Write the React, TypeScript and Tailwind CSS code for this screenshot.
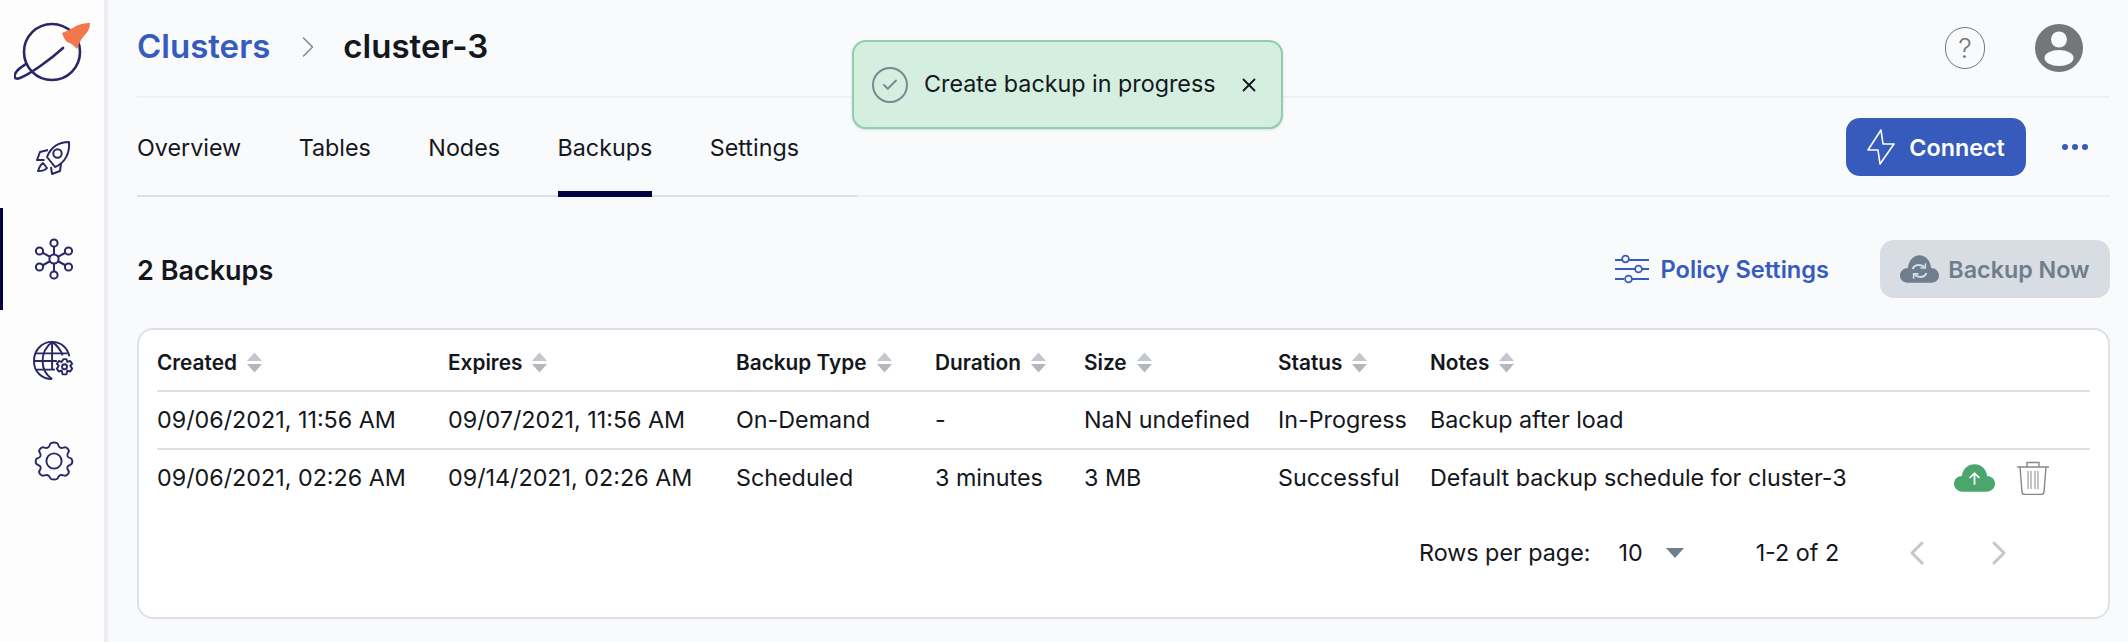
import { ChevronLeft, ChevronRight, X, Check } from "lucide-react";

const navy = "#2a2766";

function Logo() {
  return (
    <svg width="80" height="70" viewBox="0 0 80 70" fill="none">
      <g transform="translate(-14 -12)">
        <circle cx="52" cy="52" r="28" stroke={navy} strokeWidth="2.6" />
        <path d="M63 48 C50 60 30 74 20 78 C14 80 13 76 17 71 C19 68 23 66 26 64" stroke={navy} strokeWidth="2.6" strokeLinecap="round" />
        <path d="M62 33 C66 31 72 29 76 26 C80 24 85 23 90 23 C90 28 88 32 84 36 C81 39 79 44 77 49 C74 46 71 43 67 42 C64 39 63 36 62 33 Z" fill="#f2784b" />
      </g>
    </svg>
  );
}

function RocketIcon() {
  return (
    <svg width="40" height="40" viewBox="0 0 40 40" fill="none" stroke={navy} strokeWidth="2">
      <path d="M35 4 C25 4 17 9 13 19 L21 29 C31 25 36 15 35 4 Z" strokeLinejoin="round" />
      <circle cx="23.5" cy="15.5" r="4.2" />
      <path d="M14 12 L6 14 L3 22 L10.5 22" strokeLinejoin="round" />
      <path d="M27 26 L26 33 L18 36 L17 29" strokeLinejoin="round" />
      <path d="M9 25 C6 27 5 30 4 33 C7 33 11 33 13 30 Z" strokeLinejoin="round" />
    </svg>
  );
}

function ClusterIcon() {
  const outer = [
    [20, 4],
    [34.5, 12],
    [34.5, 28],
    [20, 36],
    [5.5, 28],
    [5.5, 12],
  ];
  return (
    <svg width="40" height="42" viewBox="0 0 40 40" fill="none" stroke={navy} strokeWidth="2">
      {outer.map(([x, y]) => (
        <g key={`${x}-${y}`}>
          <line x1="20" y1="20" x2={x} y2={y} />
          <circle cx={x} cy={y} r="3.6" fill="#fff" />
        </g>
      ))}
      <circle cx="20" cy="20" r="4.6" fill="#fff" />
    </svg>
  );
}

function GlobeGearIcon() {
  return (
    <svg width="42" height="42" viewBox="0 0 44 42" fill="none" stroke={navy} strokeWidth="2">
      <path d="M38 16 C36 7 29 1 20 1 C9 1 1 10 1 21 C1 32 9 40 20 40" />
      <path d="M20 1 C12 7 10 14 10 21 C10 28 13 35 20 40 M20 1 C26 5 29 10 31 15 M20 1 V30" />
      <path d="M3 13 H36 M1 21 H25 M4 30 H23" />
      <path d="M32 19 L35 19 L36 22 L39 21 L41 24 L39 26 L41 29 L39 32 L36 31 L35 35 L31 35 L30 31 L27 32 L25 29 L27 26 L25 24 L27 21 L30 22 Z" fill="#fff" strokeLinejoin="round" />
      <circle cx="33" cy="27" r="2.6" />
    </svg>
  );
}

function GearIcon() {
  return (
    <svg width="40" height="40" viewBox="0 0 42 42" fill="none" stroke={navy} strokeWidth="2">
      <path
        d="M17 3 C18 1 24 1 25 3 C26 7 28 8 31 7 C34 5 38 10 36 12 C34 15 35 17 38 18 C41 19 41 24 38 25 C35 26 34 28 36 31 C38 33 34 38 31 36 C28 35 26 36 25 39 C24 41 18 41 17 39 C16 36 14 35 11 36 C8 38 4 33 6 31 C8 28 7 26 4 25 C1 24 1 19 4 18 C7 17 8 15 6 12 C4 10 8 5 11 7 C14 8 16 7 17 3 Z"
        strokeLinejoin="round"
      />
      <circle cx="21" cy="21" r="8" />
    </svg>
  );
}

function SortIcon() {
  return (
    <svg width="17" height="21" viewBox="0 0 18 21" className="ml-[9px] shrink-0">
      <path d="M9 0 L17 9 H1 Z" fill="#c3c6cb" />
      <path d="M9 21 L17 12 H1 Z" fill="#b4b8bd" />
    </svg>
  );
}

function CloudUpIcon() {
  return (
    <svg width="41" height="30" viewBox="0 0 42 30" fill="none">
      <path d="M9 29 C3 29 0 25 0 21 C0 16 4 13 8 13 C9 6 14 1 21 1 C28 1 33 6 34 13 C38 13 42 16 42 21 C42 25 39 29 33 29 Z" fill="#4aa66c" />
      <path d="M21 22 V10 M16 15 L21 10 L26 15" stroke="#fff" strokeWidth="1.8" />
    </svg>
  );
}

function TrashIcon() {
  return (
    <svg width="34" height="34" viewBox="0 0 34 34" fill="none" stroke="#85888c" strokeWidth="1.4">
      <path d="M1 6 H33 M11 6 V1.5 H23 V6" />
      <path d="M4 6 L6 31 C6 33 7 33.5 9 33.5 H25 C27 33.5 28 33 28 31 L30 6" />
      <path d="M12 10 V28 M15 10 V28 M19 10 V28 M22 10 V28" strokeWidth="1" />
    </svg>
  );
}

function SlidersIcon() {
  return (
    <svg width="34" height="30" viewBox="0 0 34 30" fill="none" stroke="#365bbd" strokeWidth="1.8">
      <path d="M0 6 H7 M14 6 H34 M0 15 H20 M27 15 H34 M0 25 H9 M16 25 H34" />
      <circle cx="10.5" cy="5" r="3.4" />
      <circle cx="23.5" cy="15" r="3.4" />
      <circle cx="13.5" cy="25" r="3.4" />
    </svg>
  );
}

function BackupCloudIcon() {
  return (
    <svg width="39" height="30" viewBox="0 0 40 30" fill="none">
      <path d="M8 29 C3 29 0 26 0 22 C0 17 4 14 8 14 C9 6 14 1 20 1 C26 1 31 6 32 14 C36 14 40 17 40 22 C40 26 37 29 32 29 Z" fill="#6f7d8c" />
      <path d="M13 15 C14 11 20 9 25 13 M27 19 C26 23 20 25 15 21" stroke="#d8dde4" strokeWidth="2" />
      <path d="M26 9 V14 H21 M14 25 V20 H19" stroke="#d8dde4" strokeWidth="1.6" />
    </svg>
  );
}

const columns = ["Created", "Expires", "Backup Type", "Duration", "Size", "Status", "Notes"];
const widths = ["w-[291px]", "w-[288px]", "w-[199px]", "w-[149px]", "w-[194px]", "w-[152px]", "w-[524px]"];

const rows = [
  ["09/06/2021, 11:56 AM", "09/07/2021, 11:56 AM", "On-Demand", "-", "NaN undefined", "In-Progress", "Backup after load"],
  ["09/06/2021, 02:26 AM", "09/14/2021, 02:26 AM", "Scheduled", "3 minutes", "3 MB", "Successful", "Default backup schedule for cluster-3"],
];

export default function App() {
  return (
    <div
      className="relative flex h-[642px] w-full overflow-hidden bg-[#f9fafc] text-[#14171c]"
      style={{ fontFamily: "Inter, 'Liberation Sans', sans-serif" }}
    >
      <aside className="flex w-[108px] shrink-0 flex-col items-stretch border-r-4 border-[#e9edf2] bg-[#fdfdfe]">
        <div className="flex h-[108px] items-start justify-center pl-[4px] pt-[12px]">
          <Logo />
        </div>
        <div className="flex h-[100px] items-center justify-center pl-[4px]">
          <RocketIcon />
        </div>
        <div className="flex h-[102px] items-center justify-center border-l-[3px] border-[#03033f] pl-[1px]">
          <ClusterIcon />
        </div>
        <div className="flex h-[101px] items-center justify-center pl-[4px]">
          <GlobeGearIcon />
        </div>
        <div className="flex h-[99px] items-center justify-center pl-[4px]">
          <GearIcon />
        </div>
      </aside>

      <main className="flex min-w-0 flex-1 flex-col pl-[29px] pr-[18px]">
        <header className="flex h-[98px] items-center justify-between border-b-2 border-[#eef0f4]">
          <div className="flex items-center pb-[2px]">
            <span className="text-[33px] font-semibold text-[#365bbd]">Clusters</span>
            <ChevronRight className="ml-[20px] mr-[17px] text-[#7d8793]" size={36} strokeWidth={1} />
            <span className="text-[33px] font-semibold">cluster-3</span>
          </div>
          <div className="flex items-center gap-[50px] pr-[27px]">
            <div className="flex h-[42px] w-[40px] items-center justify-center rounded-full border-[1.5px] border-[#757677] text-[27px] font-light leading-none text-[#757677]">
              ?
            </div>
            <svg width="48" height="48" viewBox="0 0 48 48">
              <circle cx="24" cy="24" r="24" fill="#757677" />
              <circle cx="24" cy="15.5" r="8" fill="#f9fafc" />
              <ellipse cx="24" cy="34" rx="14.5" ry="8" fill="#f9fafc" />
            </svg>
          </div>
        </header>

        <nav className="relative flex h-[99px] items-center justify-between border-b-2 border-[#eef0f4]">
          <div className="flex h-full items-center gap-[57.5px] pt-[4px] text-[23.3px]">
            <span>Overview</span>
            <span>Tables</span>
            <span>Nodes</span>
            <span>Backups</span>
            <span>Settings</span>
          </div>
          <div className="absolute bottom-[-2px] left-0 h-[2px] w-[720px] bg-[#dde1e7]" />
          <div className="absolute bottom-[-2px] left-[421px] h-[6px] w-[94px] bg-[#03033f]" />
          <div className="flex items-center">
            <button className="flex h-[58px] w-[180px] items-center justify-center gap-[14px] rounded-[14px] bg-[#365bbd] text-[23.3px] font-semibold text-white">
              <svg width="28" height="36" viewBox="0 0 28 36" fill="none" stroke="#fff" strokeWidth="1.6" strokeLinejoin="round">
                <path d="M14 1 L1 21 H11 L13 35 L27 15 H16 Z" />
              </svg>
              <span className="pt-[3px]">Connect</span>
            </button>
            <div className="ml-[36px] mr-[22px] flex items-center gap-[4px]">
              <span className="h-[6px] w-[6px] rounded-full bg-[#365bbd]" />
              <span className="h-[6px] w-[6px] rounded-full bg-[#365bbd]" />
              <span className="h-[6px] w-[6px] rounded-full bg-[#365bbd]" />
            </div>
          </div>
        </nav>

        <div className="mt-[43px] flex h-[58px] items-center justify-between">
          <h2 className="pt-[5px] text-[27px] font-semibold">2 Backups</h2>
          <div className="flex items-center">
            <div className="flex items-center gap-[12px] text-[23.6px] font-semibold text-[#365bbd]">
              <SlidersIcon />
              <span className="pt-[2px]">Policy Settings</span>
            </div>
            <button className="ml-[51px] flex h-[58px] w-[230px] items-center justify-center gap-[9px] rounded-[14px] bg-[#d8dde4] text-[23.3px] font-semibold text-[#6f7d8c]">
              <BackupCloudIcon />
              <span className="pt-[2px]">Backup Now</span>
            </button>
          </div>
        </div>

        <section className="mt-[30px] flex h-[291px] flex-col rounded-[16px] border-2 border-[#dde1e7] bg-white px-[18px]">
          <table className="w-full table-fixed border-collapse text-left">
            <thead>
              <tr className="h-[61px] border-b-2 border-[#dde1e7]">
                {columns.map((c, i) => (
                  <th key={c} className={`${widths[i]} p-0 pt-[5px] text-[20.8px] font-semibold`}>
                    <span className="flex items-center">
                      {c}
                      <SortIcon />
                    </span>
                  </th>
                ))}
                <th className="p-0" />
              </tr>
            </thead>
            <tbody className="text-[23.3px]">
              {rows.map((row, r) => (
                <tr key={r} className={r === 0 ? "h-[58px] border-b-2 border-[#dde1e7]" : "h-[57px]"}>
                  {row.map((cell, i) => (
                    <td key={i} className="whitespace-nowrap p-0 pt-[1px]">
                      {cell}
                    </td>
                  ))}
                  <td className="p-0">
                    {r === 1 && (
                      <div className="flex items-center gap-[21px]">
                        <CloudUpIcon />
                        <TrashIcon />
                      </div>
                    )}
                  </td>
                </tr>
              ))}
            </tbody>
          </table>
          <div className="mt-[27px] flex items-center text-[23.3px]">
            <span className="ml-[1262px]">Rows per page:</span>
            <span className="ml-[28px]">10</span>
            <svg width="18" height="10" viewBox="0 0 18 10" className="ml-[23px]">
              <path d="M0 0 H18 L9 10 Z" fill="#6f7d8c" />
            </svg>
            <span className="ml-[72px]">1-2 of 2</span>
            <ChevronLeft className="ml-[58px] text-[#c5c8cb]" size={40} strokeWidth={1.8} />
            <ChevronRight className="ml-[42px] text-[#c5c8cb]" size={40} strokeWidth={1.8} />
          </div>
        </section>
      </main>

      <div className="absolute left-[852px] top-[40px] flex h-[89px] w-[431px] items-center rounded-[14px] border-2 border-[#8fd0ac] bg-[#d4eee0] pl-[18px] shadow-sm">
        <div className="flex h-[36px] w-[36px] items-center justify-center rounded-full border-2 border-[#7d8793]">
          <Check size={18} strokeWidth={2.6} className="text-[#7d8793]" />
        </div>
        <span className="ml-[16px] text-[23.3px]">Create backup in progress</span>
        <X size={22} strokeWidth={2} className="ml-[22px]" />
      </div>
    </div>
  );
}
